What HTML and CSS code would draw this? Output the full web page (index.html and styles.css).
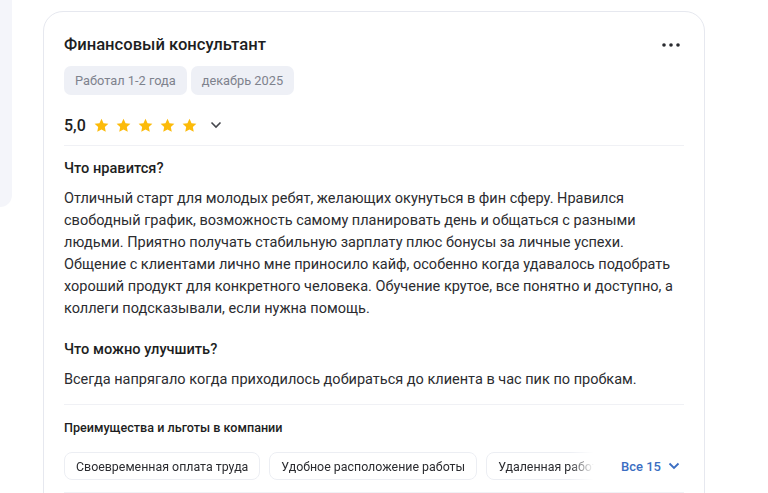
FILE: index.html
```html
<!DOCTYPE html>
<html lang="ru">
<head>
<meta charset="utf-8">
<link rel="stylesheet" href="styles.css">
</head>
<body>
<div class="page">
  <div class="side"></div>
  <article class="card">
    <header class="card-head">
      <h2 class="title">Финансовый консультант</h2>
      <button class="more" aria-label="Ещё">
        <svg width="18" height="4" viewBox="0 0 18 4"><circle cx="2" cy="2" r="1.8"/><circle cx="9" cy="2" r="1.8"/><circle cx="16" cy="2" r="1.8"/></svg>
      </button>
    </header>
    <div class="tags">
      <span class="tag">Работал 1-2 года</span>
      <span class="tag">декабрь 2025</span>
    </div>
    <div class="rating">
      <span class="score">5,0</span>
      <span class="stars">
        <svg viewBox="0 0 24 24"><path d="M12 2.5l2.9 6.2 6.8.8-5 4.7 1.3 6.7L12 17.6l-6 3.3 1.3-6.7-5-4.7 6.8-.8z"/></svg>
        <svg viewBox="0 0 24 24"><path d="M12 2.5l2.9 6.2 6.8.8-5 4.7 1.3 6.7L12 17.6l-6 3.3 1.3-6.7-5-4.7 6.8-.8z"/></svg>
        <svg viewBox="0 0 24 24"><path d="M12 2.5l2.9 6.2 6.8.8-5 4.7 1.3 6.7L12 17.6l-6 3.3 1.3-6.7-5-4.7 6.8-.8z"/></svg>
        <svg viewBox="0 0 24 24"><path d="M12 2.5l2.9 6.2 6.8.8-5 4.7 1.3 6.7L12 17.6l-6 3.3 1.3-6.7-5-4.7 6.8-.8z"/></svg>
        <svg viewBox="0 0 24 24"><path d="M12 2.5l2.9 6.2 6.8.8-5 4.7 1.3 6.7L12 17.6l-6 3.3 1.3-6.7-5-4.7 6.8-.8z"/></svg>
      </span>
      <svg class="chev" width="12" height="8" viewBox="0 0 12 8"><path d="M1.5 1.5l4.5 4.5 4.5-4.5"/></svg>
    </div>
    <div class="divider"></div>
    <section class="block">
      <h3 class="subhead">Что нравится?</h3>
      <p class="text">Отличный старт для молодых ребят, желающих окунуться в фин сферу. Нравился свободный график, возможность самому планировать день и общаться с разными людьми. Приятно получать стабильную зарплату плюс бонусы за личные успехи. Общение с клиентами лично мне приносило кайф, особенно когда удавалось подобрать хороший продукт для конкретного человека. Обучение крутое, все понятно и доступно, а коллеги подсказывали, если нужна помощь.</p>
    </section>
    <section class="block second">
      <h3 class="subhead">Что можно улучшить?</h3>
      <p class="text">Всегда напрягало когда приходилось добираться до клиента в час пик по пробкам.</p>
    </section>
    <div class="divider d2"></div>
    <section class="perks">
      <h4 class="perks-title">Преимущества и льготы в компании</h4>
      <div class="perks-row">
        <div class="chips">
          <span class="chip">Своевременная оплата труда</span>
          <span class="chip">Удобное расположение работы</span>
          <span class="chip">Удаленная работа</span>
        </div>
        <button class="all">Все 15
          <svg width="12" height="8" viewBox="0 0 12 8"><path d="M1.5 1.5l4.5 4.5 4.5-4.5"/></svg>
        </button>
      </div>
    </section>
    <div class="divider d3"></div>
  </article>
</div>
</body>
</html>
```

FILE: styles.css
```css
* { box-sizing: border-box; }
html, body { margin: 0; padding: 0; background: #fff; }
body {
  font-family: Roboto, "Liberation Sans", Arial, sans-serif;
  color: #1f2024;
  overflow: hidden;
  height: 493px;
}
.page {
  display: flex;
  align-items: flex-start;
}
.side {
  width: 12px;
  height: 207px;
  background: #f4f5fa;
  border-bottom-right-radius: 12px;
  flex: none;
}
.card {
  margin-left: 31px;
  margin-top: 11px;
  width: 662px;
  min-height: 600px;
  border: 1px solid #e6e8ef;
  border-radius: 20px;
  padding: 22px 20px 0 20px;
  background: #fff;
}
.card-head {
  display: flex;
  align-items: center;
  justify-content: space-between;
}
.title {
  margin: 0;
  font-size: 16.6px;
  line-height: 22px;
  font-weight: 500;
  color: #1d1e22;
}
.more {
  border: 0;
  background: none;
  padding: 0;
  margin-right: 4px;
  display: flex;
  fill: #2a2b30;
}
.tags {
  display: flex;
  gap: 4px;
  margin-top: 10px;
}
.tag {
  background: #eef0f6;
  border-radius: 7px;
  height: 29px;
  padding: 0 11px;
  display: flex;
  align-items: center;
  font-size: 12.8px;
  color: #7e828d;
}
.rating {
  display: flex;
  align-items: center;
  height: 24px;
  margin-top: 18px;
}
.score {
  font-size: 16px;
  font-weight: 500;
  color: #1d1e22;
  margin-right: 7px;
}
.stars {
  display: flex;
  gap: 5px;
}
.stars svg {
  width: 17px;
  height: 17px;
  fill: #fcbb0a;
}
.chev {
  margin-left: 12px;
  fill: none;
  stroke: #45474d;
  stroke-width: 1.6;
}
.divider {
  height: 1px;
  background: #f0f1f5;
  margin-top: 8px;
}
.block { margin-top: 12px; }
.block.second { margin-top: 19px; }
.subhead {
  margin: 0;
  font-size: 14.6px;
  line-height: 20px;
  font-weight: 500;
  color: #1d1e22;
}
.text {
  margin: 10px 0 0;
  font-size: 14.5px;
  line-height: 22px;
  color: #2b2c30;
}
.divider.d2 { margin-top: 13px; }
.perks { margin-top: 14px; }
.perks-title {
  margin: 0;
  font-size: 12.6px;
  line-height: 18px;
  font-weight: 500;
  color: #1d1e22;
}
.perks-row {
  display: flex;
  align-items: center;
  margin-top: 15px;
}
.chips {
  display: flex;
  gap: 9px;
  width: 536px;
  overflow: hidden;
  flex: none;
  -webkit-mask-image: linear-gradient(to right, #000 505px, transparent 530px);
  mask-image: linear-gradient(to right, #000 505px, transparent 530px);
}
.chip {
  flex: none;
  height: 28px;
  border: 1px solid #eceef3;
  border-radius: 8px;
  padding: 0 11px;
  display: flex;
  align-items: center;
  font-size: 12.4px;
  color: #2b2c30;
  white-space: nowrap;
}
.all {
  margin-left: 21px;
  flex: none;
  white-space: nowrap;
  border: 0;
  background: none;
  padding: 0;
  display: flex;
  align-items: center;
  gap: 7px;
  font-family: inherit;
  font-size: 13px;
  font-weight: 500;
  color: #3b6ec2;
}
.all svg {
  fill: none;
  stroke: #3b6ec2;
  stroke-width: 1.8;
}
.divider.d3 { margin-top: 12px; }
```
